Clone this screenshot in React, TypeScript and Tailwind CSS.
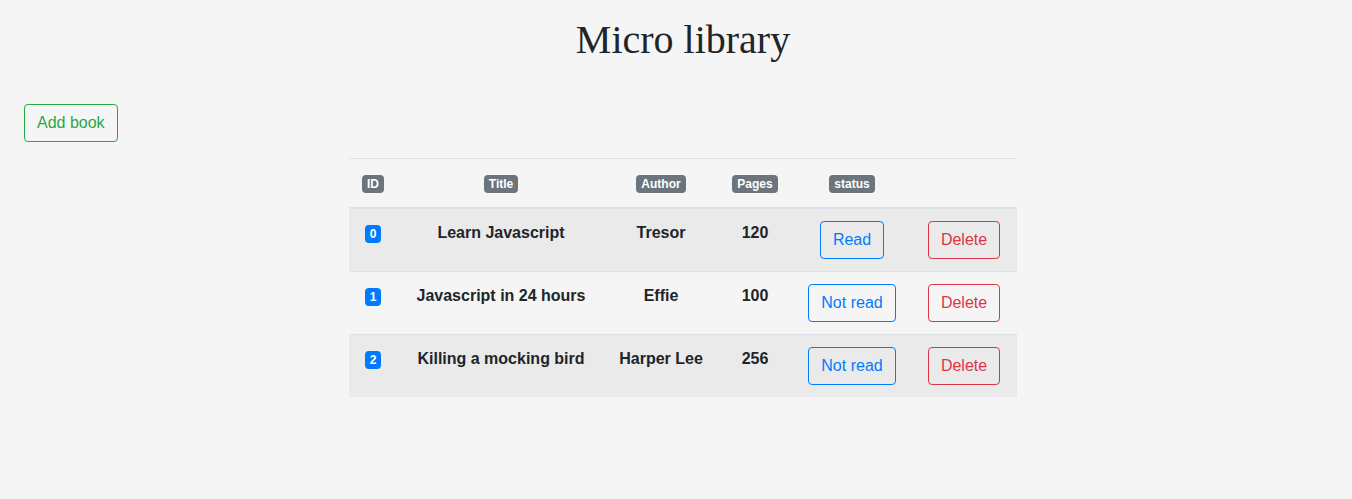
import React from 'react';

interface Book {
  id: number;
  title: string;
  author: string;
  pages: number;
  read: boolean;
}

const books: Book[] = [
  { id: 0, title: 'Learn Javascript', author: 'Tresor', pages: 120, read: true },
  { id: 1, title: 'Javascript in 24 hours', author: 'Effie', pages: 100, read: false },
  { id: 2, title: 'Killing a mocking bird', author: 'Harper Lee', pages: 256, read: false },
];

const HeadBadge: React.FC<{ label: string }> = ({ label }) => (
  <span className="inline-block rounded-[4px] bg-[#6c757d] px-[5px] py-[3px] text-[12px] font-bold leading-none text-white align-middle">
    {label}
  </span>
);

const App: React.FC = () => {
  return (
    <div className="min-h-[499px] bg-[#f5f5f5] text-[#212529] font-['Liberation_Sans',Arial,sans-serif] text-[16px] leading-[24px] pb-10">
      {/* Header */}
      <h1 className="pt-[16px] pl-[14px] text-center font-['Liberation_Serif','Times_New_Roman',serif] text-[40px] leading-[48px] font-normal">
        Micro library
      </h1>

      <div className="mt-[40px] pl-[24px]">
        <button className="rounded-[4px] border border-[#28a745] px-[12px] py-[6px] text-[16px] leading-[24px] text-[#28a745]">
          Add book
        </button>
      </div>

      {/* Table */}
      <table className="mt-[16px] ml-[349px] w-[668px] table-fixed border-collapse text-center">
        <colgroup>
          <col className="w-[48px]" />
          <col className="w-[208px]" />
          <col className="w-[112px]" />
          <col className="w-[76px]" />
          <col className="w-[118px]" />
          <col className="w-[106px]" />
        </colgroup>
        <thead>
          <tr className="border-t border-[#dee2e6] border-b-2">
            <th className="p-[12px] font-bold"><HeadBadge label="ID" /></th>
            <th className="p-[12px] font-bold"><HeadBadge label="Title" /></th>
            <th className="p-[12px] font-bold"><HeadBadge label="Author" /></th>
            <th className="p-[12px] font-bold"><HeadBadge label="Pages" /></th>
            <th className="p-[12px] font-bold"><HeadBadge label="status" /></th>
            <th className="p-[12px]"></th>
          </tr>
        </thead>
        <tbody>
          {books.map((b, i) => (
            <tr
              key={b.id}
              className={`border-t border-[#dee2e6] ${i % 2 === 0 ? 'bg-[#eaeaea]' : ''}`}
            >
              <td className="p-[12px] align-top">
                <span className="mt-[4px] inline-block rounded-[4px] bg-[#007bff] px-[5px] py-[3px] text-[12px] font-bold leading-none text-white">
                  {b.id}
                </span>
              </td>
              <td className="p-[12px] align-top font-bold whitespace-nowrap">{b.title}</td>
              <td className="p-[12px] align-top font-bold whitespace-nowrap">{b.author}</td>
              <td className="p-[12px] align-top font-bold">{b.pages}</td>
              <td className="p-[12px] align-top">
                <button className="rounded-[4px] border border-[#007bff] px-[12px] py-[6px] leading-[24px] text-[#007bff] whitespace-nowrap">
                  {b.read ? 'Read' : 'Not read'}
                </button>
              </td>
              <td className="p-[12px] align-top">
                <button className="rounded-[4px] border border-[#dc3545] px-[12px] py-[6px] leading-[24px] text-[#dc3545]">
                  Delete
                </button>
              </td>
            </tr>
          ))}
        </tbody>
      </table>
    </div>
  );
};

export default App;
